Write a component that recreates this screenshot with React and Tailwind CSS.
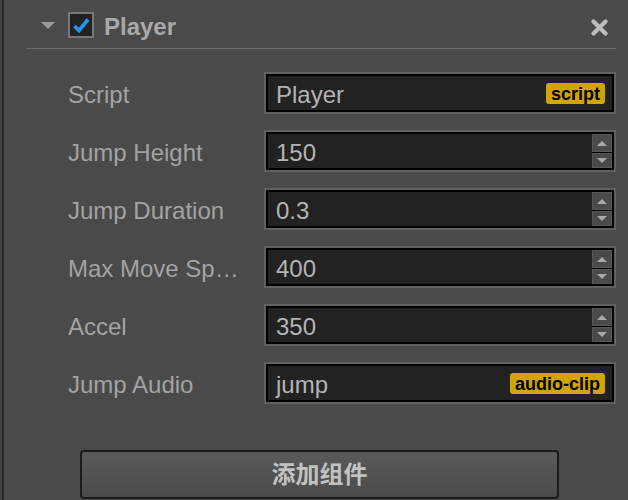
import React from 'react';

const rows = [
  { label: 'Script', value: 'Player', badge: 'script' },
  { label: 'Jump Height', value: '150', spin: true },
  { label: 'Jump Duration', value: '0.3', spin: true },
  { label: 'Max Move Speed', value: '400', spin: true },
  { label: 'Accel', value: '350', spin: true },
  { label: 'Jump Audio', value: 'jump', badge: 'audio-clip' },
];

const font = { fontFamily: '"Liberation Sans", Arial, sans-serif' };

const Spinner = () => (
  <div className="flex flex-col gap-[1px] w-[20px] h-full bg-black">
    <div className="h-[18px] bg-[#4a4a4a] border border-[#575757] flex items-center justify-center">
      <svg width="10" height="5" viewBox="0 0 10 5"><polygon points="0,5 5,0 10,5" fill="#a9a9a9" /></svg>
    </div>
    <div className="flex-1 bg-[#4a4a4a] border border-[#575757] flex items-center justify-center">
      <svg width="10" height="5" viewBox="0 0 10 5"><polygon points="0,0 10,0 5,5" fill="#a9a9a9" /></svg>
    </div>
  </div>
);

const Row = ({ label, value, badge, spin }) => (
  <div className="flex items-center h-[42px] pl-[64px] pr-[12px]">
    <div className="w-[176px] mr-[20px] truncate text-[24px] text-[#a3a3a3] leading-none pt-[5px] pb-[2px]">{label}</div>
    <div className="flex-1 h-full border-2 border-[#616161]">
      <div className="h-full border-2 border-black bg-[#222222] flex items-center">
        <span className="flex-1 pl-[8px] pt-[3px] text-[24px] text-[#b4b4b4] leading-none">{value}</span>
        {badge && (
          <span className="mr-[7px] mt-[1px] h-[21px] px-[5px] rounded-[3px] bg-[#d1a500] text-black text-[18px] font-bold leading-[22px]">
            {badge}
          </span>
        )}
        {spin && <Spinner />}
      </div>
    </div>
  </div>
);

export default function App() {
  return (
    <div className="w-[628px] h-[500px] overflow-hidden bg-[#4a4a4a] flex" style={font}>
      <div className="w-[2px] bg-[#434343]" />
      <div className="w-[2px] bg-[#282828]" />
      <div className="flex-1 flex flex-col">
        {/* header */}
        <div className="flex items-center h-[48px] pl-[37px] pr-[20px]">
          <svg className="mt-[2px]" width="14" height="7" viewBox="0 0 14 7"><polygon points="0,0 14,0 7,7" fill="#9a9a9a" /></svg>
          <div className="ml-[13px] mt-[2px] w-[26px] h-[26px] border-2 border-[#787878] bg-[#222222] flex items-center justify-center">
            <svg width="22" height="22" viewBox="0 0 22 22">
              <polyline points="4.5,12 9,16.5 18,5.5" fill="none" stroke="#2299f0" strokeWidth="3.6" />
            </svg>
          </div>
          <span className="ml-[10px] pt-[5px] text-[24px] font-bold text-[#a9a9a9] leading-none">Player</span>
          <div className="flex-1" />
          <svg className="mt-[6px]" width="17" height="17" viewBox="0 0 17 17">
            <path d="M2.5 2.5 L14.5 14.5 M14.5 2.5 L2.5 14.5" stroke="#bdbdbd" strokeWidth="4.2" strokeLinecap="round" />
          </svg>
        </div>
        <div className="h-px bg-[#6a6a6a] ml-[22px] mr-[12px]" />

        <div className="flex flex-col gap-[16px] pt-[23px]">
          {rows.map((r) => (
            <Row key={r.label} {...r} />
          ))}
        </div>

        <button
          type="button"
          className="mt-[46px] ml-[76px] w-[479px] h-[49px] shrink-0 rounded-[4px] border-2 border-[#1b1b1b] bg-gradient-to-b from-[#5a5a5a] to-[#4b4b4b] text-[24px] font-bold text-[#c2c2c2] flex items-center justify-center"
          style={{ fontFamily: '"Liberation Sans", "Noto Sans CJK SC", sans-serif' }}
        >
          添加组件
        </button>
      </div>
    </div>
  );
}
